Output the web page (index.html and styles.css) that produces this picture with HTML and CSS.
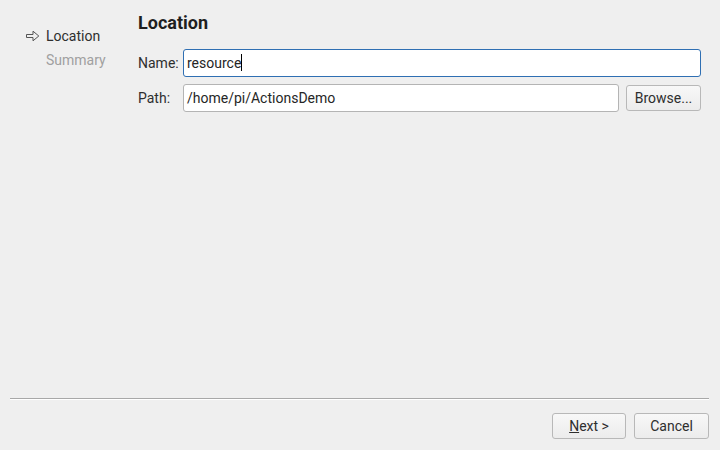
FILE: index.html
```html
<!DOCTYPE html>
<html>
<head>
<meta charset="utf-8">
<link rel="stylesheet" href="styles.css">
</head>
<body>
<div class="wizard">
  <div class="top">
    <div class="steps">
      <div class="step current">
        <svg class="arrow" width="14" height="12" viewBox="0 0 14 12"><path d="M0.5 4.5 H7 V1.2 L12.8 6 L7 10.8 V7.5 H0.5 Z" fill="none" stroke="#555" stroke-width="1"/></svg>
        <span>Location</span>
      </div>
      <div class="step todo"><span>Summary</span></div>
    </div>
    <div class="page">
      <h1 class="title">Location</h1>
      <div class="row">
        <label class="lbl">Name:</label>
        <div class="input focus">resource<span class="caret"></span></div>
      </div>
      <div class="row">
        <label class="lbl">Path:</label>
        <div class="input">/home/pi/ActionsDemo</div>
        <button class="btn browse">Browse...</button>
      </div>
    </div>
  </div>
  <div class="sep"></div>
  <div class="buttons">
    <button class="btn next"><u>N</u>ext &gt;</button>
    <button class="btn cancel">Cancel</button>
  </div>
</div>
</body>
</html>
```
FILE: styles.css
```css
html, body {
  margin: 0;
  padding: 0;
  background: #efefef;
  font-family: Roboto, "Liberation Sans", sans-serif;
  font-size: 14px;
  color: #2e2e2e;
}
.wizard {
  width: 720px;
  height: 450px;
  display: flex;
  flex-direction: column;
}
.top {
  flex: 1;
  display: flex;
}
.steps {
  width: 112px;
  padding-left: 26px;
  padding-top: 27px;
}
.step {
  display: flex;
  align-items: center;
  height: 18px;
  margin-bottom: 6px;
}
.step span {
  margin-left: 20px;
}
.step.current span {
  margin-left: 6px;
}
.arrow {
  display: block;
}
.step.todo {
  color: #a0a0a0;
}
.page {
  flex: 1;
  padding-right: 19px;
  padding-top: 11px;
}
.title {
  margin: 0 0 14px 0;
  font-size: 18px;
  font-weight: bold;
  color: #1f1f1f;
  line-height: 24px;
}
.row {
  display: flex;
  align-items: center;
  margin-bottom: 7px;
}
.lbl {
  width: 45px;
}
.input {
  flex: 1;
  height: 28px;
  box-sizing: border-box;
  border: 1px solid #b4b4b4;
  border-radius: 3px;
  background: #ffffff;
  padding-left: 3px;
  line-height: 26px;
  color: #262626;
}
.input.focus {
  border-color: #2f6fb3;
}
.caret {
  display: inline-block;
  width: 1px;
  height: 17px;
  background: #000;
  vertical-align: -3px;
}
.btn {
  font-family: Roboto, "Liberation Sans", sans-serif;
  font-size: 14px;
  color: #2e2e2e;
  background: linear-gradient(#f8f8f8, #ececec);
  border: 1px solid #b8b8b8;
  border-radius: 3px;
  height: 26px;
  padding: 0;
}
.browse {
  width: 75px;
  margin-left: 7px;
}
.sep {
  margin: 0 11px 0 10px;
  height: 1px;
  background: #a8a8a8;
  border-bottom: 1px solid #ffffff;
}
.buttons {
  display: flex;
  justify-content: flex-end;
  padding: 13px 11px 11px 0;
  gap: 8px;
}
.next {
  width: 74px;
}
.cancel {
  width: 75px;
}
```
